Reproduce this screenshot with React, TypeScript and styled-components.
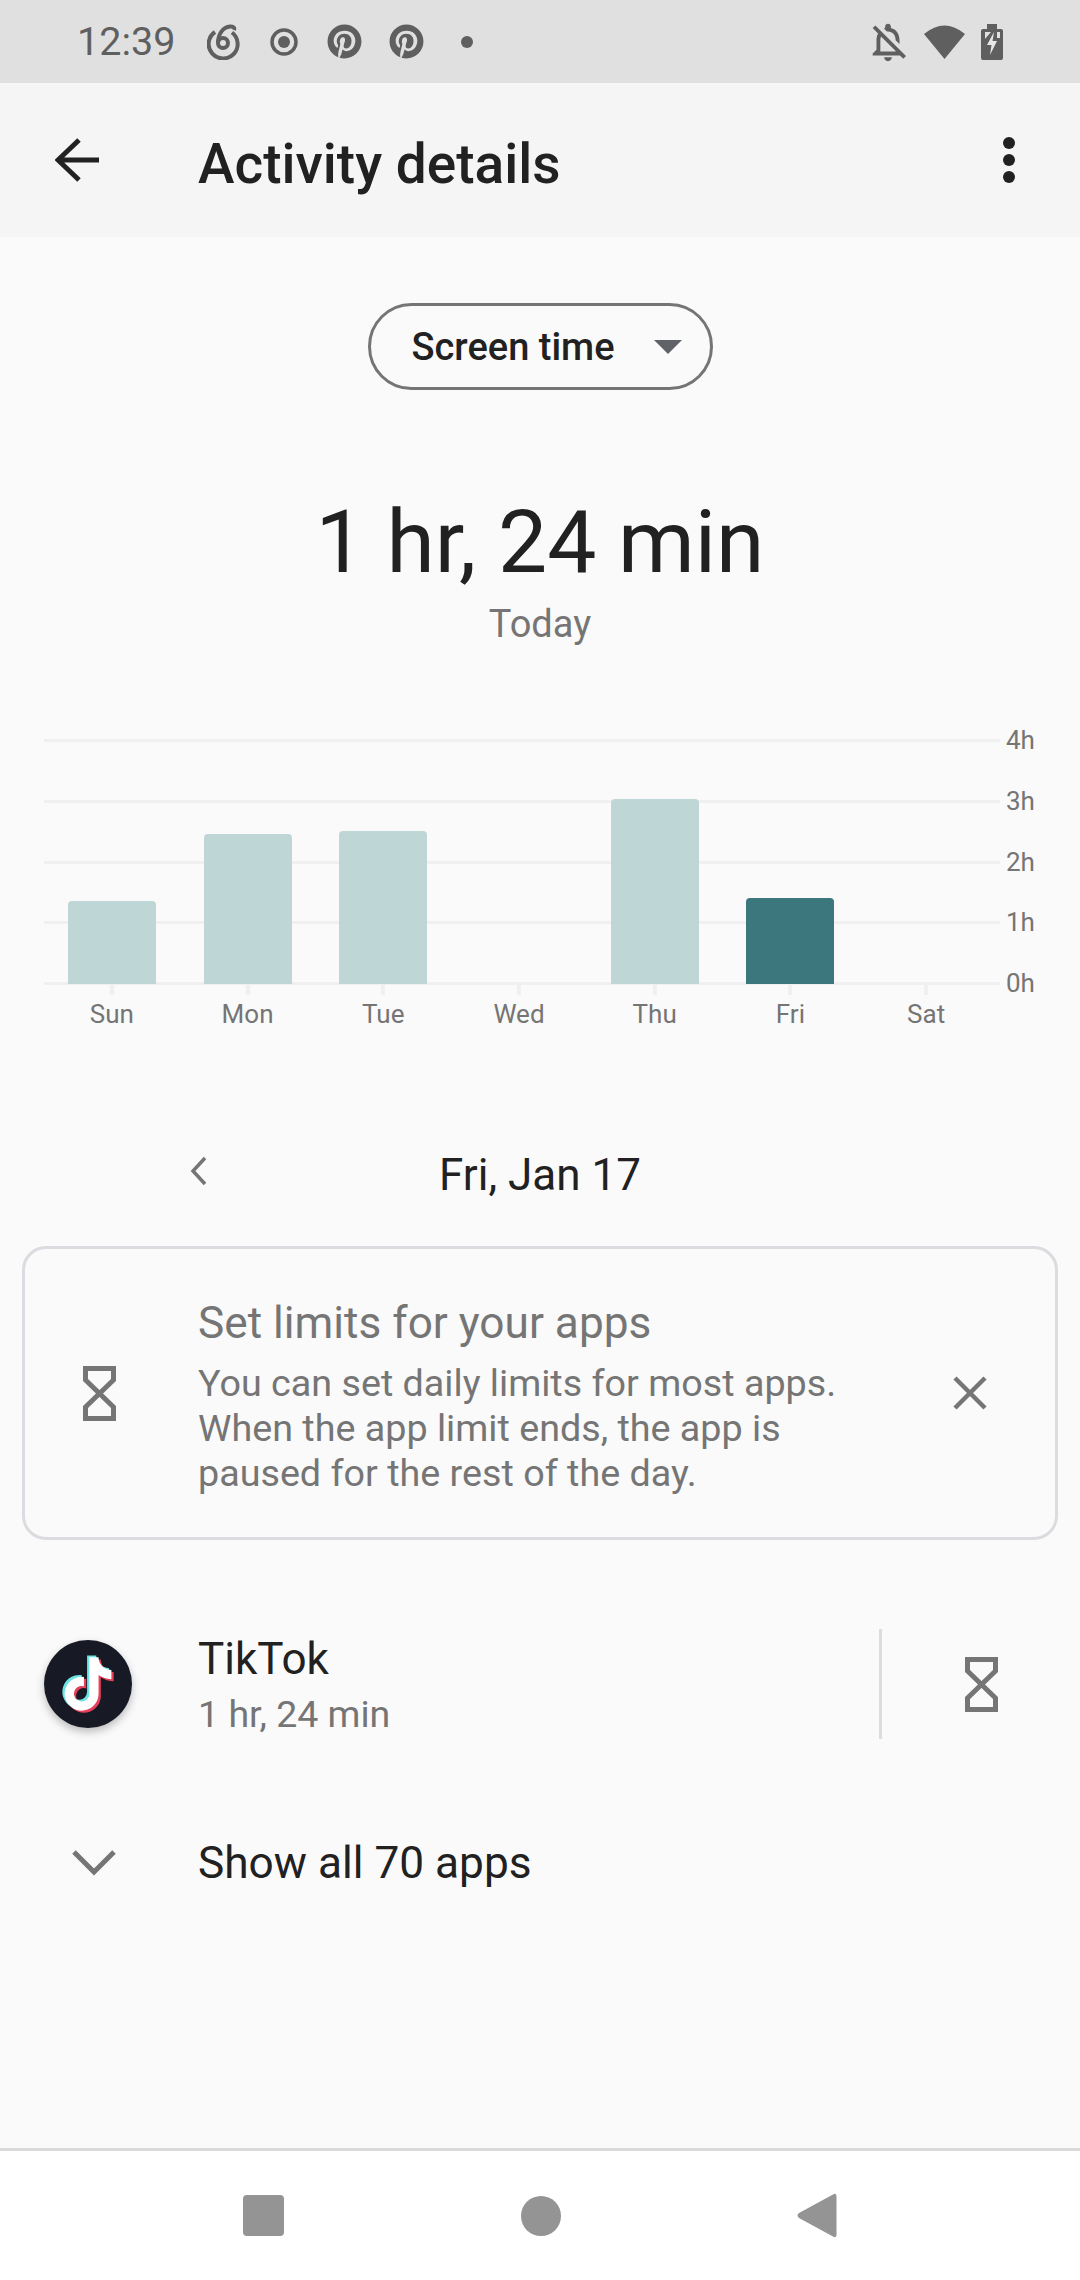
import React from "react";
import styled, { createGlobalStyle } from "styled-components";
import { FaPinterest } from "react-icons/fa";
import { MdOutlineNotificationsOff } from "react-icons/md";

const days = [
  { name: "Sun", height: 83 },
  { name: "Mon", height: 150 },
  { name: "Tue", height: 153 },
  { name: "Wed", height: 0 },
  { name: "Thu", height: 185 },
  { name: "Fri", height: 86, active: true },
  { name: "Sat", height: 0 },
];

const hours = ["4h", "3h", "2h", "1h", "0h"];

const TIKTOK_PATH =
  "M448,209.91a210.06,210.06,0,0,1-122.77-39.25V349.38A162.55,162.55,0,1,1,185,188.31V278.2a74.62,74.62,0,1,0,52.23,71.18V0l88,0a121.18,121.18,0,0,0,1.86,22.17h0A122.18,122.18,0,0,0,381,102.39a121.43,121.43,0,0,0,67,20.14Z";

const Hourglass = () => (
  <HourglassSvg viewBox="0 0 33 55">
    <path d="M2.5 2.5H30.5V14L2.5 41V52.5H30.5V41L2.5 14Z" fill="none" stroke="#757575" strokeWidth="5" />
  </HourglassSvg>
);

const App: React.FC = () => {
  return (
    <>
      <GlobalStyle />
      <Page>
        <StatusBar>
          <Clock>12:39</Clock>
          <NotificationIcons>
            <svg width="34" height="36" viewBox="0 0 34 36" fill="none" stroke="#5f5f5f" strokeWidth="4">
              <path d="M8 8A14.5 14.5 0 1 0 25 8.500" />
              <circle cx="16" cy="19" r="5" />
              <path d="M11 19C11 10 16 3 23 2.500C26 2.300 28 3.500 27 6" />
            </svg>
            <svg width="32" height="32" viewBox="0 0 32 32">
              <circle cx="16" cy="16" r="12" fill="none" stroke="#5f5f5f" strokeWidth="3.500" />
              <circle cx="16" cy="16" r="6" fill="#5f5f5f" />
            </svg>
            <FaPinterest size={35} color="#5f5f5f" />
            <FaPinterest size={35} color="#5f5f5f" />
            <NotificationDot />
          </NotificationIcons>
          <SystemIcons>
            <MdOutlineNotificationsOff size={46} color="#5f5f5f" />
            <svg width="41" height="34" viewBox="0 0 41 34">
              <path d="M0 9Q20.500 -8 41 9L20.500 34Z" fill="#5f5f5f" />
            </svg>
            <BatteryIcon width="22" height="36" viewBox="0 0 22 36">
              <path d="M6 0H16V5H20Q22 5 22 7V34Q22 36 20 36H2Q0 36 0 34V7Q0 5 2 5H6Z" fill="#5f5f5f" />
              <path d="M4 8H10L4 15ZM16 8H19V14H16Z" fill="#e0e0e0" />
              <path d="M13 8L6 21H10.500L9 31L16 17H11.500Z" fill="#e8e8e8" />
            </BatteryIcon>
          </SystemIcons>
        </StatusBar>

        <AppBar>
          <svg width="44" height="44" viewBox="0 0 44 44" fill="none" stroke="#212121" strokeWidth="5">
            <path d="M44 22H3M24 2L3 22L24 42" />
          </svg>
          <Title>Activity details</Title>
          <MenuDots>
            <i />
            <i />
            <i />
          </MenuDots>
        </AppBar>

        <Content>
          <Dropdown>
            <span>Screen time</span>
            <DropdownCaret />
          </Dropdown>

          <Total>1 hr, 24 min</Total>
          <TotalLabel>Today</TotalLabel>

          <Chart>
            <Plot>
              <GridLines>
                {hours.map((h) => (
                  <GridLine key={h} />
                ))}
              </GridLines>
              <Bars>
                {days.map((d) => (
                  <BarSlot key={d.name}>
                    <Bar $height={d.height} $active={d.active} />
                  </BarSlot>
                ))}
              </Bars>
            </Plot>
            <HourLabels>
              {hours.map((h) => (
                <HourLabel key={h}>{h}</HourLabel>
              ))}
            </HourLabels>
          </Chart>
          <DayRow>
            {days.map((d) => (
              <Day key={d.name}>
                <Tick />
                <span>{d.name}</span>
              </Day>
            ))}
          </DayRow>

          <DateNav>
            <PrevDate width="18" height="30" viewBox="0 0 18 30" fill="none" stroke="#757575" strokeWidth="3.500">
              <path d="M15 2L3 15L15 28" />
            </PrevDate>
            Fri, Jan 17
          </DateNav>

          <Card>
            <CardIcon>
              <Hourglass />
            </CardIcon>
            <CardText>
              <CardTitle>Set limits for your apps</CardTitle>
              <CardBody>
                You can set daily limits for most apps.
                <br />
                When the app limit ends, the app is
                <br />
                paused for the rest of the day.
              </CardBody>
            </CardText>
            <svg width="34" height="34" viewBox="0 0 34 34" stroke="#757575" strokeWidth="4.500">
              <path d="M2 2L32 32M32 2L2 32" />
            </svg>
          </Card>

          <AppRow>
            <AppIcon>
              <svg width="52" height="58" viewBox="-24 -22 496 556">
                <path d={TIKTOK_PATH} fill="#6de4e4" transform="translate(-22 -18)" />
                <path d={TIKTOK_PATH} fill="#e8405a" transform="translate(22 20)" />
                <path d={TIKTOK_PATH} fill="#fff" />
              </svg>
            </AppIcon>
            <AppInfo>
              <AppName>TikTok</AppName>
              <AppTime>1 hr, 24 min</AppTime>
            </AppInfo>
            <AppLimit>
              <Hourglass />
            </AppLimit>
          </AppRow>

          <ShowAll>
            <svg width="44" height="26" viewBox="0 0 44 26" fill="none" stroke="#757575" strokeWidth="5">
              <path d="M2 2L22 22L42 2" />
            </svg>
            <span>Show all 70 apps</span>
          </ShowAll>
        </Content>

        <NavBar>
          <NavSquare />
          <NavCircle />
          <svg width="40" height="45" viewBox="0 0 40 45">
            <path d="M36 1.500Q39 -0.500 39.500 3V42Q39 45.500 36 43.500L2 25Q-1 22.500 2 20Z" fill="#949494" />
          </svg>
        </NavBar>
      </Page>
    </>
  );
};

export default App;

const GlobalStyle = createGlobalStyle`
  html, body {
    margin: 0;
    padding: 0;
    background: #fafafa;
    font-family: Roboto, "Liberation Sans", sans-serif;
  }
`;

const Page = styled.div`
  width: 1080px;
  height: 2280px;
  display: flex;
  flex-direction: column;
  overflow: hidden;
`;

const StatusBar = styled.div`
  height: 83px;
  flex: none;
  display: flex;
  align-items: center;
  padding: 0 77px 0 77px;
  background: #e0e0e0;
  box-sizing: border-box;
`;

const Clock = styled.div`
  font-size: 39.5px;
  color: #5f5f5f;
`;

const NotificationIcons = styled.div`
  display: flex;
  align-items: center;
  gap: 27px;
  margin-left: 32px;
`;

const NotificationDot = styled.div`
  width: 12px;
  height: 12px;
  margin-left: 10px;
  border-radius: 50%;
  background: #5f5f5f;
`;

const SystemIcons = styled.div`
  display: flex;
  align-items: center;
  gap: 13px;
  margin-left: auto;
`;

const BatteryIcon = styled.svg`
  margin-left: 3px;
`;

const AppBar = styled.div`
  height: 154px;
  flex: none;
  display: flex;
  align-items: center;
  padding: 0 65px 0 55px;
  background: #f5f5f5;
  box-sizing: border-box;
`;

const Title = styled.h1`
  margin: 7px 0 0 99px;
  font-size: 55px;
  font-weight: 500;
  color: #212121;
`;

const MenuDots = styled.div`
  display: flex;
  flex-direction: column;
  gap: 5px;
  margin-left: auto;

  i {
    display: block;
    width: 12px;
    height: 12px;
    border-radius: 50%;
    background: #212121;
  }
`;

const Content = styled.main`
  flex: 1;
  display: flex;
  flex-direction: column;
  padding-top: 66px;
  background: #fafafa;
`;

const Dropdown = styled.div`
  width: 345px;
  height: 87px;
  align-self: center;
  display: flex;
  align-items: center;
  justify-content: space-between;
  padding: 0 28px 0 41px;
  border: 3px solid #757575;
  border-radius: 44px;
  box-sizing: border-box;
  font-size: 38px;
  font-weight: 500;
  color: #212121;
`;

const DropdownCaret = styled.div`
  width: 0;
  height: 0;
  border-left: 14px solid transparent;
  border-right: 14px solid transparent;
  border-top: 14px solid #5f6368;
`;

const Total = styled.div`
  margin-top: 102px;
  text-align: center;
  font-size: 87.5px;
  line-height: 100px;
  color: #212121;
`;

const TotalLabel = styled.div`
  margin-top: 9px;
  text-align: center;
  font-size: 38px;
  line-height: 46px;
  color: #757575;
`;

const Chart = styled.div`
  display: flex;
  margin: 92px 0 0 44px;
`;

const Plot = styled.div`
  position: relative;
  width: 956px;
  height: 246px;
`;

const GridLines = styled.div`
  height: 100%;
  display: flex;
  flex-direction: column;
  justify-content: space-between;
`;

const GridLine = styled.div`
  height: 3px;
  background: #f0f0f0;
`;

const Bars = styled.div`
  position: absolute;
  inset: 0 6px 1px 0;
  display: grid;
  grid-template-columns: repeat(7, 1fr);
`;

const BarSlot = styled.div`
  display: flex;
  align-items: flex-end;
  justify-content: center;
`;

const Bar = styled.div<{ $height: number; $active?: boolean }>`
  width: 88px;
  height: ${(p) => p.$height}px;
  border-radius: 4px 4px 0 0;
  background: ${(p) => (p.$active ? "#3c777d" : "#bfd6d7")};
`;

const HourLabels = styled.div`
  height: 246px;
  display: flex;
  flex-direction: column;
  justify-content: space-between;
  margin-left: 6px;
`;

const HourLabel = styled.div`
  height: 3px;
  line-height: 3px;
  font-size: 26px;
  color: #757575;
`;

const DayRow = styled.div`
  width: 950px;
  margin-left: 44px;
  display: grid;
  grid-template-columns: repeat(7, 1fr);
`;

const Day = styled.div`
  display: flex;
  flex-direction: column;
  align-items: center;
  font-size: 26px;
  line-height: 30px;
  color: #757575;
`;

const Tick = styled.div`
  width: 4px;
  height: 10px;
  margin-bottom: 4px;
  background: #f0f0f0;
`;

const DateNav = styled.div`
  position: relative;
  margin-top: 121px;
  text-align: center;
  font-size: 44px;
  line-height: 50px;
  color: #212121;
`;

const PrevDate = styled.svg`
  position: absolute;
  left: 190px;
  top: 6px;
`;

const Card = styled.section`
  height: 294px;
  margin: 46px 22px 0;
  display: flex;
  align-items: center;
  border: 3px solid #dadce0;
  border-radius: 24px;
  box-sizing: border-box;
  padding: 0 68px 0 58px;
`;

const HourglassSvg = styled.svg`
  width: 33px;
  height: 55px;
  display: block;
`;

const CardIcon = styled.div`
  flex: none;
  width: 115px;
`;

const CardText = styled.div`
  flex: 1;
  margin-top: 8px;
  color: #757575;
`;

const CardTitle = styled.div`
  font-size: 44.2px;
  line-height: 50px;
`;

const CardBody = styled.div`
  margin-top: 13px;
  font-size: 37.7px;
  line-height: 45px;
`;

const AppRow = styled.div`
  height: 110px;
  margin-top: 89px;
  display: flex;
  align-items: center;
  padding-left: 44px;
`;

const AppIcon = styled.div`
  width: 88px;
  height: 88px;
  flex: none;
  display: flex;
  align-items: center;
  justify-content: center;
  border-radius: 50%;
  background: #171a24;
  box-shadow: 0 4px 8px rgba(0, 0, 0, 0.25);
`;

const AppInfo = styled.div`
  flex: 1;
  margin-left: 66px;
`;

const AppName = styled.div`
  font-size: 44px;
  line-height: 52px;
  color: #212121;
`;

const AppTime = styled.div`
  margin-top: 7px;
  font-size: 37.5px;
  line-height: 44px;
  color: #757575;
`;

const AppLimit = styled.div`
  width: 201px;
  height: 110px;
  flex: none;
  display: flex;
  align-items: center;
  justify-content: center;
  border-left: 3px solid #dadce0;
  box-sizing: border-box;
`;

const ShowAll = styled.div`
  margin-top: 99px;
  display: flex;
  align-items: center;
  padding-left: 72px;
  font-size: 44.2px;
  line-height: 50px;
  color: #212121;

  span {
    margin-left: 82px;
  }
`;

const NavBar = styled.nav`
  height: 132px;
  flex: none;
  display: flex;
  align-items: center;
  padding-left: 243px;
  border-top: 3px solid #d9d9d9;
  background: #fff;
  box-sizing: border-box;
`;

const NavSquare = styled.div`
  width: 41px;
  height: 41px;
  border-radius: 4px;
  background: #949494;
`;

const NavCircle = styled.div`
  width: 40px;
  height: 40px;
  margin: 0 236px 0 237px;
  border-radius: 50%;
  background: #949494;
`;
